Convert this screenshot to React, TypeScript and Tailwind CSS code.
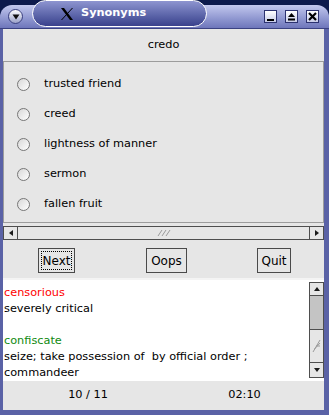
const Arrow = ({ dir }: { dir: 'left' | 'right' | 'up' | 'down' }) => {
  const pts = {
    left: '2,4 6,1 6,7',
    right: '6,4 2,1 2,7',
    up: '4,2 1,6 7,6',
    down: '4,6 1,2 7,2',
  }[dir]
  return (
    <svg width="8" height="8" viewBox="0 0 8 8">
      <polygon points={pts} fill="#1a1a1a" />
    </svg>
  )
}

const Grip = ({ vertical }: { vertical?: boolean }) => (
  <svg width={vertical ? 10 : 16} height={vertical ? 16 : 8} viewBox={vertical ? '0 0 10 16' : '0 0 16 8'}>
    {vertical
      ? [0, 3, 6].map((o) => (
          <line key={o} x1={1 + o / 2} y1={14 - o} x2={8} y2={2 + o} stroke="#9a9a9a" strokeWidth="1" />
        ))
      : [0, 4, 8].map((o) => (
          <line key={o} x1={2 + o} y1="7" x2={6 + o} y2="1" stroke="#9a9a9a" strokeWidth="1" />
        ))}
  </svg>
)

const XLogo = () => (
  <svg width="14" height="14" viewBox="0 0 14 14">
    <path d="M1 1 L4 1 L13 13 L10 13 Z" fill="#000" />
    <path d="M12.5 1 L1.5 13" stroke="#000" strokeWidth="1" />
  </svg>
)

const TitleButton = ({ kind }: { kind: 'min' | 'max' | 'close' }) => (
  <div className="w-[13px] h-[13px] bg-gradient-to-b from-[#ffffff] to-[#c8cce8] border border-[#2c3270] flex items-center justify-center">
    {kind === 'min' && <div className="w-[7px] h-[2px] bg-black mt-[6px]" />}
    {kind === 'max' && (
      <svg width="9" height="9" viewBox="0 0 9 9">
        <polygon points="4.5,1 8,5 1,5" fill="#000" />
        <rect x="1" y="6.5" width="7" height="2" fill="#000" />
      </svg>
    )}
    {kind === 'close' && (
      <svg width="9" height="9" viewBox="0 0 9 9">
        <path d="M1 1 L8 8 M8 1 L1 8" stroke="#000" strokeWidth="2.2" />
      </svg>
    )}
  </div>
)

const App = () => {
  const options = ['trusted friend', 'creed', 'lightness of manner', 'sermon', 'fallen fruit']

  return (
    <div className="w-[329px] h-[415px] bg-[#0d1a4c] font-['DejaVu_Sans',sans-serif] text-black overflow-hidden">
      {/* title bar */}
      <div className="h-[29px] pt-[5px]">
        <div className="h-[24px] rounded-t-[12px] bg-gradient-to-b from-[#c3c8ee] to-[#6e76bb] border-b border-[#3b4282] flex items-center pl-[8px] pr-[10px]">
          <div className="w-[15px] h-[15px] rounded-full bg-gradient-to-b from-[#ffffff] to-[#9aa0c8] border border-[#3a4080] flex items-center justify-center">
            <svg width="8" height="6" viewBox="0 0 8 6">
              <polygon points="0.5,0.5 7.5,0.5 4,5.5" fill="#101010" />
            </svg>
          </div>
          <div className="ml-[9px] -mt-[6px] h-[27px] w-[175px] rounded-full border border-white bg-gradient-to-b from-[#8e95d0] to-[#3a418c] flex items-center pl-[27px] gap-[7px]">
            <XLogo />
            <span className="text-white font-bold text-[11.3px]">Synonyms</span>
          </div>
          <div className="ml-auto flex gap-[8px]">
            <TitleButton kind="min" />
            <TitleButton kind="max" />
            <TitleButton kind="close" />
          </div>
        </div>
      </div>

      {/* body */}
      <div className="h-[386px] bg-[#e6e6e6] border-l-[3px] border-r-[5px] border-b-[5px] border-[#5a62a6] flex flex-col text-[11.3px]">
        <div className="h-[32px] flex items-center justify-center">credo</div>

        <div className="h-[162px] border border-[#9c9c9c] pt-[7px]">
          {options.map((opt) => (
            <div key={opt} className="h-[30px] flex items-center">
              <div className="ml-[13px] w-[13px] h-[13px] rounded-full border border-[#767676] bg-gradient-to-br from-[#d8d8d8] to-white" />
              <span className="ml-[14px]">{opt}</span>
            </div>
          ))}
        </div>

        <div className="mt-[3px] h-[14px] flex border border-[#4e4e4e]">
          <div className="w-[14px] border-r border-[#4e4e4e] flex items-center justify-center">
            <Arrow dir="left" />
          </div>
          <div className="flex-1 flex items-center justify-center">
            <Grip />
          </div>
          <div className="w-[14px] border-l border-[#4e4e4e] flex items-center justify-center">
            <Arrow dir="right" />
          </div>
        </div>

        <div className="h-[38px] flex items-center text-[12px]">
          <button className="ml-[35px] mt-[3px] w-[37px] h-[25px] border border-[#4a4a4a] bg-[#e6e6e6] p-[2px]">
            <span className="w-full h-full border border-dotted border-black flex items-center justify-center">Next</span>
          </button>
          <button className="ml-[71px] mt-[3px] w-[41px] h-[25px] border border-[#4a4a4a] bg-[#e6e6e6]">Oops</button>
          <button className="ml-[70px] mt-[3px] w-[34px] h-[25px] border border-[#4a4a4a] bg-[#e6e6e6]">Quit</button>
        </div>

        <div className="h-[2px] bg-[#f4f4f4]" />

        <div className="h-[101px] bg-white flex">
          <div className="flex-1 pl-[1px] pt-[5px] leading-[16px]">
            <div className="text-[#ff0000]">censorious</div>
            <div>severely critical</div>
            <div className="h-[16px]" />
            <div className="text-[#108a10]">confiscate</div>
            <div className="whitespace-pre">seize; take possession of  by official order ;</div>
            <div>commandeer</div>
          </div>
          <div className="w-[15px] h-[96px] mt-[2px] border border-[#4e4e4e] flex flex-col bg-[#c4c4c4]">
            <div className="h-[13px] shrink-0 bg-[#e6e6e6] border-b border-[#4e4e4e] flex items-center justify-center">
              <Arrow dir="up" />
            </div>
            <div className="h-[33px] shrink-0" />
            <div className="h-[34px] shrink-0 bg-[#e6e6e6] border-y border-[#4e4e4e] flex items-center justify-center">
              <Grip vertical />
            </div>
            <div className="h-[14px] shrink-0 bg-[#e6e6e6] flex items-center justify-center">
              <Arrow dir="down" />
            </div>
          </div>
        </div>

        <div className="flex-1 flex items-center">
          <div className="w-[170px] text-center">10 / 11</div>
          <div className="w-[143px] text-center">02:10</div>
        </div>
      </div>
    </div>
  )
}

export default App
